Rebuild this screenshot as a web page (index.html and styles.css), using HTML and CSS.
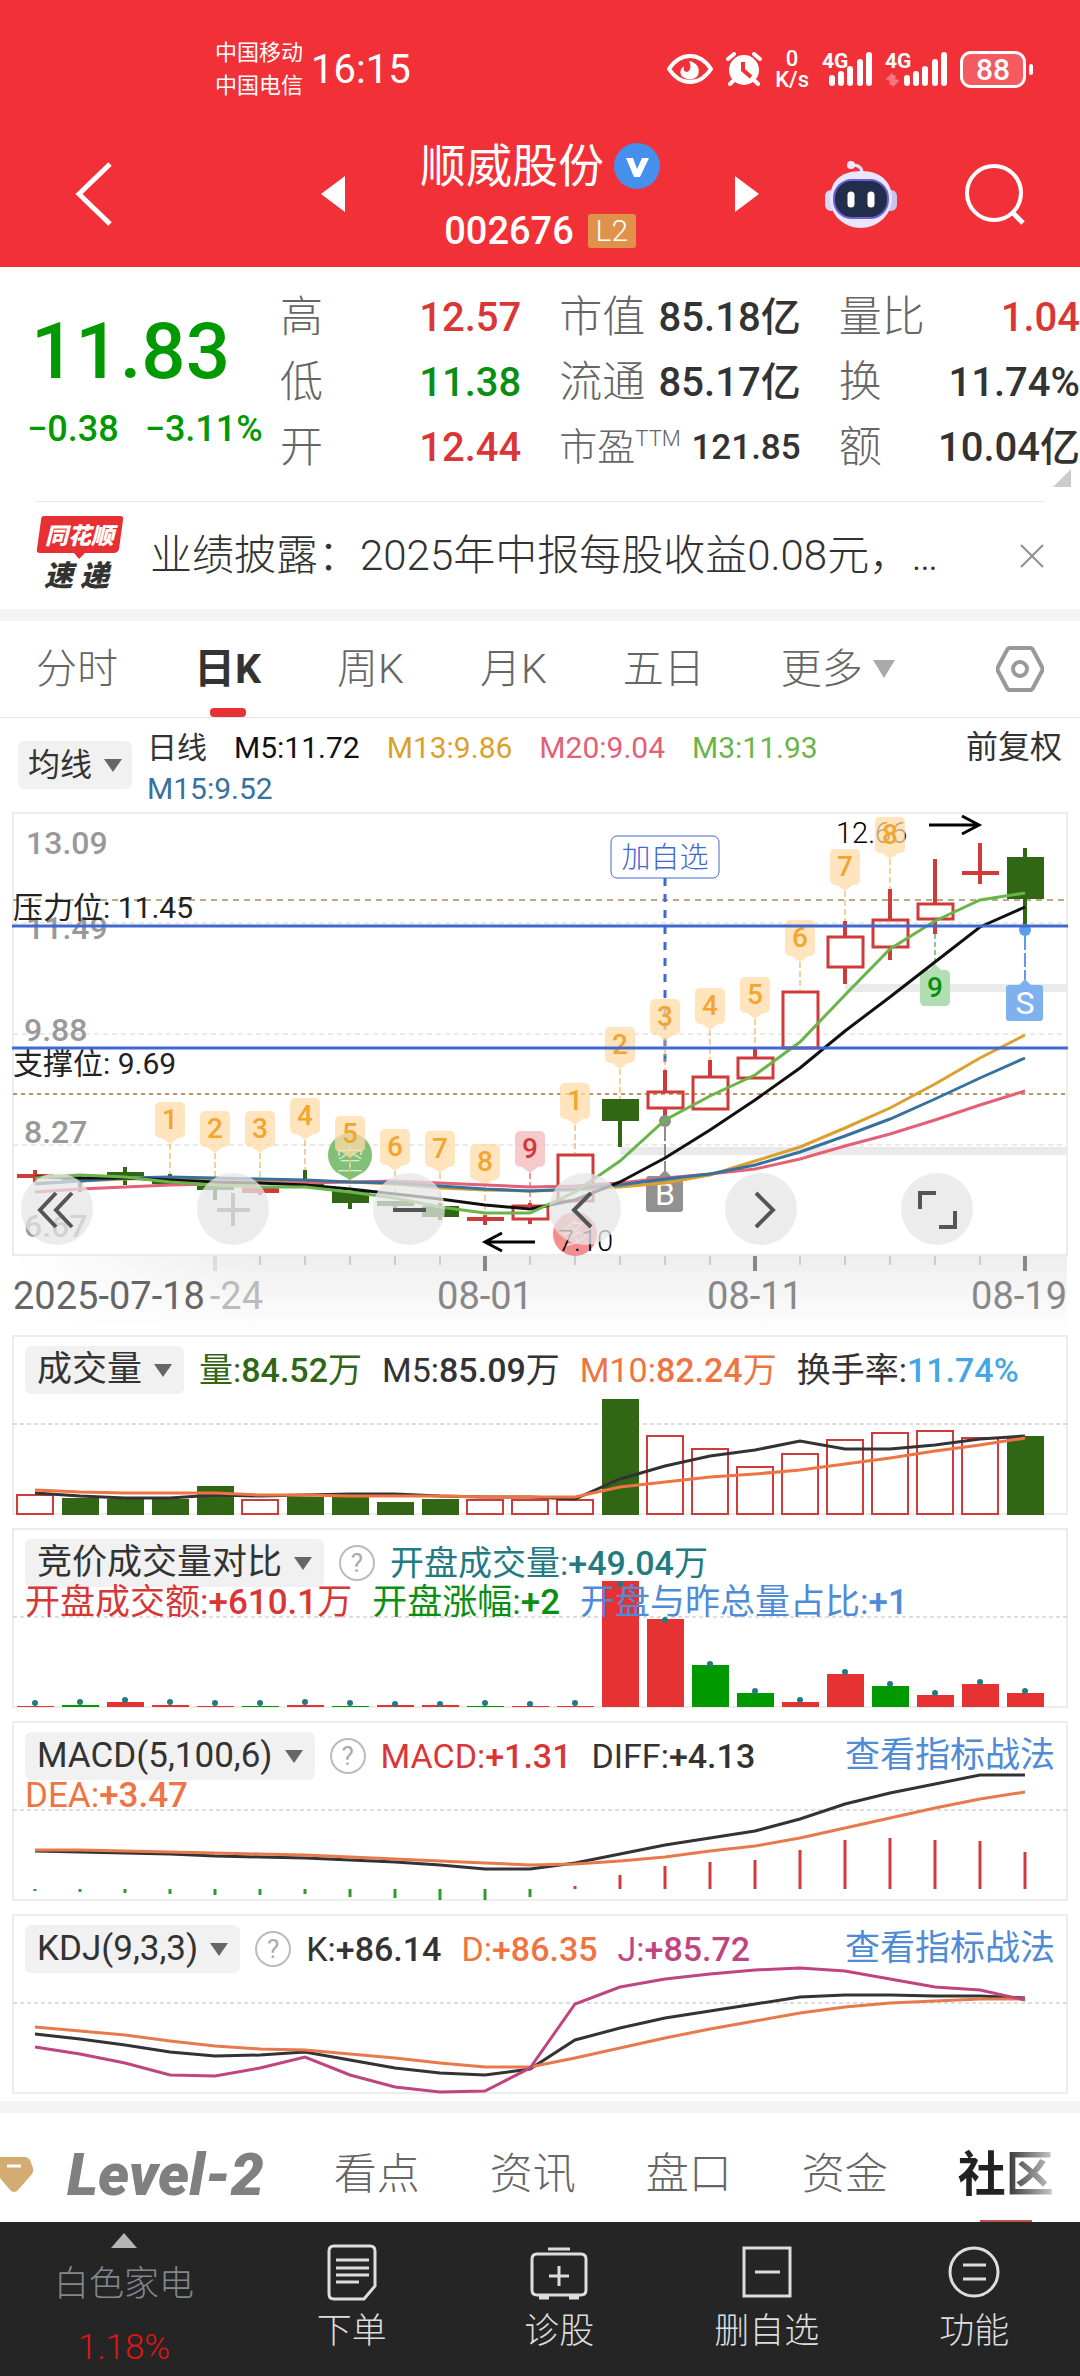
FILE: index.html
```
<!DOCTYPE html>
<html lang="zh-CN">
<head>
    <meta charset="UTF-8">
    <meta name="viewport" content="width=device-width, initial-scale=1.0">
    <title>顺威股份 002676</title>
    <link rel="stylesheet" href="styles.css">
</head>
<body>
    <header class="top">
        <div class="status-bar">
            <div class="carriers"><span>中国移动</span><span>中国电信</span></div>
            <div class="clock">16:15</div>
            <div class="status-icons">
                <svg width="46" height="32" viewBox="0 0 46 32">
                    <path d="M2 16C8 7 15 3 23 3s15 4 21 13C38 25 31 29 23 29S8 25 2 16z" fill="none" stroke="#fff" stroke-width="4" stroke-linejoin="round"/>
                    <path d="M22 8c3 6 1 10-2 11-3 0-4-3-3-6-4 3-5 8-1 11 5 4 12 3 15-2 3-7-2-13-9-14z" fill="#fff"/>
                </svg>
                <svg width="36" height="34" viewBox="0 0 36 34">
                    <circle cx="18" cy="18" r="15" fill="#fff"/>
                    <path d="M2 7l6-5M34 7l-6-5M7 29l-3 3M29 29l3 3" stroke="#fff" stroke-width="4" stroke-linecap="round"/>
                    <path d="M17 10v8l8 7" fill="none" stroke="#f23037" stroke-width="4"/>
                </svg>
                <div class="speed"><span>0</span><span>K/s</span></div>
                <svg width="50" height="44" viewBox="0 -4 50 44">
                    <text x="0" y="17" class="net">4G</text>
                    <path d="M10 27v5M19 23v9M28 18v14M38 11v21M47 4v28" stroke="#fff" stroke-width="6" stroke-linecap="round"/>
                </svg>
                <svg width="62" height="44" viewBox="0 -4 62 44">
                    <text x="0" y="17" class="net">4G</text>
                    <path d="M6 34v-9l-4 4M9 24v9l4-4" fill="none" stroke="#f9777c" stroke-width="3"/>
                    <path d="M22 27v5M31 23v9M40 18v14M50 11v21M59 4v28" stroke="#fff" stroke-width="6" stroke-linecap="round"/>
                </svg>
                <div class="battery">88</div>
            </div>
        </div>
        <nav class="title-bar">
            <button class="back" aria-label="返回">
                <svg width="40" height="68" viewBox="0 0 40 68"><path d="M36 4L5 34l31 30" fill="none" stroke="#fff" stroke-width="5"/></svg>
            </button>
            <button aria-label="上一只">
                <svg width="24" height="36" viewBox="0 0 24 36"><path d="M24 0v36L0 18z" fill="#fff"/></svg>
            </button>
            <div class="stock">
                <h1>顺威股份
                    <svg width="46" height="46" viewBox="0 0 46 46"><circle cx="23" cy="23" r="23" fill="#4590ed"/><path d="M12 15h7l4 11 5-11h7l-9 19h-6z" fill="#fff"/></svg>
                </h1>
                <p class="code">002676 <span class="l2">L2</span></p>
            </div>
            <button aria-label="下一只">
                <svg width="24" height="36" viewBox="0 0 24 36"><path d="M0 0v36l24-18z" fill="#fff"/></svg>
            </button>
            <button class="tool" aria-label="助手">
                <svg width="74" height="70" viewBox="0 0 74 70">
                    <path d="M38 14c0-6-4-8-10-8" fill="none" stroke="#e6e0f8" stroke-width="3"/>
                    <circle cx="27" cy="6" r="4" fill="#eee9fb"/>
                    <rect x="1" y="31" width="12" height="21" rx="6" fill="#dcd8f4"/>
                    <rect x="61" y="31" width="12" height="21" rx="6" fill="#c9c3ee"/>
                    <path d="M37 12c22 0 31 13 31 28S54 69 37 69 6 56 6 40s9-28 31-28z" fill="#e9e6fa"/>
                    <rect x="10" y="21" width="54" height="38" rx="18" fill="#222c4b" stroke="#6d5fd6" stroke-width="2"/>
                    <path d="M27 36v9M47 36v9" stroke="#fff" stroke-width="7" stroke-linecap="round"/>
                </svg>
            </button>
            <button class="tool" aria-label="搜索">
                <svg width="64" height="64" viewBox="0 0 64 64"><circle cx="31" cy="31" r="27" fill="none" stroke="#fff" stroke-width="4"/><path d="M49 50l11 11" stroke="#fff" stroke-width="5"/></svg>
            </button>
        </nav>
    </header>

    <section class="quote">
        <div class="price">
            <strong>11.83</strong>
            <div class="change"><span>−0.38</span><span>−3.11%</span></div>
        </div>
        <dl>
            <div><dt>高</dt><dd class="red">12.57</dd></div>
            <div><dt>低</dt><dd class="green">11.38</dd></div>
            <div><dt>开</dt><dd class="red">12.44</dd></div>
        </dl>
        <dl>
            <div><dt>市值</dt><dd>85.18亿</dd></div>
            <div><dt>流通</dt><dd>85.17亿</dd></div>
            <div class="pe"><dt>市盈<sup>TTM</sup></dt><dd>121.85</dd></div>
        </dl>
        <dl>
            <div><dt>量比</dt><dd class="red">1.04</dd></div>
            <div><dt>换</dt><dd>11.74%</dd></div>
            <div><dt>额</dt><dd>10.04亿</dd></div>
        </dl>
    </section>

    <section class="news">
        <svg width="88" height="84" viewBox="0 0 88 84">
            <path d="M8 2h76q4 0 3 4l-4 29q-1 4-5 4H49l-6 6-5-6H4q-4 0-3-4L5 6q0-4 3-4z" fill="#e63034"/>
            <text x="9" y="30" class="logo-top">同花顺</text>
            <text x="8 44" y="72" class="logo-bottom">速递</text>
        </svg>
        <a href="#">业绩披露：2025年中报每股收益0.08元，…</a>
        <button aria-label="关闭">
            <svg width="24" height="24" viewBox="0 0 24 24"><path d="M1 1l22 22M23 1L1 23" stroke="#8e8e8e" stroke-width="2"/></svg>
        </button>
    </section>

    <nav class="periods">
        <button>分时</button>
        <button class="active">日K</button>
        <button>周K</button>
        <button>月K</button>
        <button>五日</button>
        <button class="more">更多<svg width="22" height="18" viewBox="0 0 22 18"><path d="M0 0h22L11 18z" fill="#aaa"/></svg></button>
        <button class="settings" aria-label="设置">
            <svg width="48" height="46" viewBox="0 0 48 46"><path d="M14 2h20q2 0 3 2l9 17q1 2 0 4l-9 17q-1 2-3 2H14q-2 0-3-2L2 25q-1-2 0-4l9-17q1-2 3-2z" fill="none" stroke="#999" stroke-width="4"/><circle cx="24" cy="23" r="7" fill="none" stroke="#999" stroke-width="4"/></svg>
        </button>
    </nav>

    <section class="ma-legend">
        <button class="pick">均线<svg width="18" height="13" viewBox="0 0 18 13"><path d="M0 0h18L9 13z" fill="#666"/></svg></button>
        <div class="ma-values">
            <span>日线</span>
            <span class="black">M5:11.72</span>
            <span class="yellow">M13:9.86</span>
            <span class="pink">M20:9.04</span>
            <span class="lime">M3:11.93</span>
            <span class="blue">M15:9.52</span>
        </div>
        <span class="adjust">前复权</span>
    </section>

    <section class="chart kline">
        <svg id="kline" viewBox="0 12 1080 523"></svg>
        <div class="chart-tools">
            <button aria-label="最早"><svg viewBox="0 0 72 72"><path d="M35 20L19 37l16 17M51 20L35 37l16 17"/></svg></button>
            <button aria-label="放大" class="faint"><svg viewBox="0 0 72 72"><path d="M36 20v33M20 37h33"/></svg></button>
            <button aria-label="缩小"><svg viewBox="0 0 72 72"><path d="M20 37h33"/></svg></button>
            <button aria-label="左移"><svg viewBox="0 0 72 72"><path d="M42 20L25 37l17 17"/></svg></button>
            <button aria-label="右移"><svg viewBox="0 0 72 72"><path d="M31 20l17 17-17 17"/></svg></button>
            <button aria-label="全屏"><svg viewBox="0 0 72 72"><path d="M19 36V20h16M54 38v16H38"/></svg></button>
        </div>
    </section>

    <section class="chart">
        <svg id="volume" viewBox="0 0 1080 193"></svg>
        <div class="legend">
            <button class="pick">成交量<svg width="18" height="13" viewBox="0 0 18 13"><path d="M0 0h18L9 13z" fill="#666"/></svg></button>
            <span class="dark-green">量:<b>84.52</b>万</span>
            <span>M5:<b>85.09</b>万</span>
            <span class="orange">M10:<b>82.24</b>万</span>
            <span>换手率:<b class="sky">11.74%</b></span>
        </div>
    </section>

    <section class="chart">
        <svg id="auction" viewBox="0 0 1080 193"></svg>
        <div class="legend">
            <button class="pick">竞价成交量对比<svg width="18" height="13" viewBox="0 0 18 13"><path d="M0 0h18L9 13z" fill="#666"/></svg></button>
            <button class="help" aria-label="说明">?</button>
            <span class="teal">开盘成交量:<b>+49.04</b>万</span>
        </div>
        <div class="legend second">
            <span class="red">开盘成交额:<b>+610.1</b>万</span>
            <span class="green">开盘涨幅:<b>+2</b></span>
            <span class="link">开盘与昨总量占比:<b>+1</b></span>
        </div>
    </section>

    <section class="chart">
        <svg id="macd" viewBox="0 0 1080 193"></svg>
        <div class="legend">
            <button class="pick">MACD(5,100,6)<svg width="18" height="13" viewBox="0 0 18 13"><path d="M0 0h18L9 13z" fill="#666"/></svg></button>
            <button class="help" aria-label="说明">?</button>
            <span class="red">MACD:<b>+1.31</b></span>
            <span>DIFF:<b>+4.13</b></span>
            <a href="#">查看指标战法</a>
        </div>
        <div class="legend second"><span class="orange">DEA:<b>+3.47</b></span></div>
    </section>

    <section class="chart">
        <svg id="kdj" viewBox="0 0 1080 187"></svg>
        <div class="legend">
            <button class="pick">KDJ(9,3,3)<svg width="18" height="13" viewBox="0 0 18 13"><path d="M0 0h18L9 13z" fill="#666"/></svg></button>
            <button class="help" aria-label="说明">?</button>
            <span>K:<b>+86.14</b></span>
            <span class="orange">D:<b>+86.35</b></span>
            <span class="purple">J:<b>+85.72</b></span>
            <a href="#">查看指标战法</a>
        </div>
    </section>

    <nav class="info-tabs">
        <svg width="34" height="38" viewBox="0 0 34 38"><path d="M0 1h25q3 0 5 3l3 8q1 3-1 6L18 34q-4 4-8 0L0 22z" fill="#d2ac72"/><path d="M7 10h14" stroke="#fff" stroke-width="3"/></svg>
        <a href="#" class="level2">Level-2</a>
        <a href="#">看点</a>
        <a href="#">资讯</a>
        <a href="#">盘口</a>
        <a href="#">资金</a>
        <a href="#" class="current"><span>社区</span></a>
    </nav>

    <footer class="bottom-bar">
        <button class="sector">
            <svg width="26" height="15" viewBox="0 0 26 15"><path d="M13 0l13 15H0z"/></svg>
            <span>白色家电</span>
            <span class="rise">1.18%</span>
        </button>
        <button>
            <svg width="60" height="60" viewBox="0 0 60 60"><path d="M12 4h36q5 0 5 5v35L42 57H12q-5 0-5-5V9q0-5 5-5zM14 18h33M14 26h33M14 33h33M14 40h23"/></svg>
            下单
        </button>
        <button>
            <svg width="60" height="60" viewBox="0 0 60 60"><path d="M8 12h44q5 0 5 5v31q0 5-5 5H8q-5 0-5-5V17q0-5 5-5zM19 7h22M30 24v20M20 34h20M10 56h10M40 56h10"/></svg>
            诊股
        </button>
        <button>
            <svg width="60" height="60" viewBox="0 0 60 60"><path d="M7 6h46v48H7zM18 30h25"/></svg>
            删自选
        </button>
        <button>
            <svg width="60" height="60" viewBox="0 0 60 60"><circle cx="30" cy="30" r="24"/><path d="M19 23h23M19 37h23"/></svg>
            功能
        </button>
    </footer>
    <script src="chart.js"></script>
</body>
</html>
```
FILE: chart.js
```
const RED = '#cf3a3a';
const GREEN = '#306614';
const x = i => 35 + i * 45;

const line = (ys, color) =>
    `<polyline points="${ys.map((y, i) => x(i) + ',' + y).join(' ')}" fill="none" stroke="${color}" stroke-width="3"/>`;
const dashed = (y, color, dash) =>
    `<path d="M13 ${y}H1067" stroke="${color}" stroke-width="2" stroke-dasharray="${dash}"/>`;
const frame = (y, h) =>
    `<rect x="13" y="${y}" width="1054" height="${h}" fill="none" stroke="#ededed" stroke-width="2"/>`;
const draw = (id, parts) => {
    document.getElementById(id).innerHTML = parts.join('');
};

// kind, high, body top, body bottom, low
const candles = [
    ['r', 370, 374, 378, 383], ['g', 374, 378, 381, 392], ['g', 367, 372, 376, 385],
    ['g', 374, 380, 384, 384], ['g', 386, 386, 390, 400], ['r', 388, 388, 393, 395],
    ['g', 370, 382, 385, 385], ['g', 391, 391, 403, 409], ['g', 401, 401, 406, 408],
    ['g', 403, 406, 417, 420], ['r', 415, 417, 421, 425], ['h', 403, 406, 419, 424],
    ['h', 355, 355, 401, 401], ['g', 299, 299, 321, 347], ['h', 270, 292, 308, 320],
    ['h', 260, 277, 309, 309], ['h', 249, 258, 278, 278], ['h', 192, 192, 248, 248],
    ['h', 121, 137, 167, 184], ['h', 89, 120, 147, 160], ['h', 59, 104, 119, 134],
    ['r', 43, 71, 75, 84], ['g', 48, 57, 99, 130]
];

function candle([kind, high, top, bottom, low], i) {
    const color = kind === 'g' ? GREEN : RED;
    const body = kind === 'h'
        ? `<rect x="${x(i) - 17}" y="${top}" width="35" height="${bottom - top}" fill="none" stroke="${color}" stroke-width="3"/>`
        : `<rect x="${x(i) - 18}" y="${top}" width="37" height="${bottom - top}" fill="${color}"/>`;
    return `<path d="M${x(i)} ${high}V${top}M${x(i)} ${bottom}V${low}" stroke="${color}" stroke-width="4"/>` + body;
}

// column, number, flag top, end of the stem
const flags = [
    [3, 1, 302, 374], [4, 2, 311, 380], [5, 3, 311, 385], [6, 4, 298, 370], [7, 5, 316, 389],
    [8, 6, 329, 400], [9, 7, 331, 404], [10, 8, 344, 416], [11, 9, 331, 404],
    [12, 1, 283, 354], [13, 2, 227, 299], [14, 3, 199, 270], [15, 4, 188, 260],
    [16, 5, 177, 249], [17, 6, 120, 191], [18, 7, 49, 121], [19, 8, 17, 89]
];

function flag([col, n, top, stem]) {
    const hot = n === 9;
    const fill = hot ? '#f4b9b9' : '#ffdba8';
    return `<path d="M${x(col)} ${top + 42}V${stem}" stroke="${hot ? RED : '#dba83e'}" stroke-dasharray="6 3"/>
        <g opacity=".75"><rect x="${x(col) - 15}" y="${top}" width="30" height="36" rx="5" fill="${fill}"/>
        <path d="M${x(col) - 8} ${top + 36}h16l-8 6z" fill="${fill}"/></g>
        <text x="${x(col)}" y="${top + 27}" class="flag" fill="${hot ? RED : '#f2a52f'}">${n}</text>`;
}

const axisTick = i => {
    const big = [4, 10, 16, 22].includes(i);
    return `<path d="M${x(i)} 456V${big ? 471 : 465}" stroke="${i === 4 ? '#ddd' : big ? '#888' : '#ccc'}" stroke-width="${big ? 4 : 2}"/>`;
};

draw('kline', [
    `<defs>
        <linearGradient id="fall" x2="0" y2="1"><stop stop-color="#eee"/><stop offset="1" stop-color="#fff"/></linearGradient>
        <linearGradient id="side"><stop stop-color="#fff"/><stop offset="1" stop-color="#fff" stop-opacity="0"/></linearGradient>
    </defs>`,
    '<rect x="13" y="456" width="1054" height="78" fill="url(#fall)"/>',
    '<rect x="13" y="456" width="240" height="78" fill="url(#side)"/>',
    frame(13, 442),
    dashed(123, '#eaeaea', '5 4'), dashed(234, '#eaeaea', '5 4'), dashed(345, '#eaeaea', '5 4'),
    '<path d="M845 188H1067M620 351H1067" stroke="#eaeaea" stroke-width="8"/>',
    '<text x="26" y="54" class="scale">13.09</text>',
    '<text x="26" y="139" class="scale">11.49</text>',
    '<text x="24" y="241" class="scale">9.88</text>',
    '<text x="24" y="343" class="scale">8.27</text>',
    '<text x="24" y="437" class="scale">6.67</text>',
    dashed(100, '#bda983', '6 5'), dashed(294, '#c29463', '4 4'),
    '<text x="13" y="118" class="level">压力位: 11.45</text>',
    '<text x="13" y="274" class="level">支撑位: 9.69</text>',
    '<path d="M665 78V262" stroke="#4168cf" stroke-width="3" stroke-dasharray="8 8"/>',
    '<rect x="611" y="36" width="108" height="42" rx="6" fill="#fff" stroke="#4168cf" stroke-width="1"/>',
    '<text x="665" y="68" class="watch">加自选</text>',
    '<text x="836" y="43" class="peak">12.66</text>',
    '<path d="M929 25h50M962 16l17 9-17 9M535 442h-50M502 433l-17 9 17 9" fill="none" stroke="#000" stroke-width="3"/>',
    candles.map(candle).join(''),
    // short and long markers
    '<path d="M350 380l-14-8a22 22 0 1 1 28 0z" fill="#6cb560" opacity=".85"/><text x="350" y="370" class="marker">空</text>',
    '<circle cx="575" cy="434" r="22" fill="#f27a7c" opacity=".85"/><text x="575" y="444" class="marker">多</text>',
    flags.map(flag).join(''),
    '<text x="558" y="451" class="peak">7.10</text>',
    // nine-turn flag under the candle
    '<path d="M935 134V164" stroke="#1c8f1c" stroke-width="1" stroke-dasharray="5 3"/>',
    '<path d="M920 175q0-5 5-5h4l6-6 6 6h4q5 0 5 5v26q0 5-5 5h-20q-5 0-5-5z" fill="#b2dfb2"/><text x="935" y="197" class="flag" fill="#0a8f0a">9</text>',
    '<circle cx="665" cy="321" r="6" fill="#8d8d8d"/><path d="M665 327V372" stroke="#8d8d8d" stroke-width="2" stroke-dasharray="14 3"/>',
    '<path d="M646 379q0-3 3-3h10l6-6 6 6h9q3 0 3 3v30q0 3-3 3h-31q-3 0-3-3z" fill="#919191"/><text x="665" y="405" class="trade">B</text>',
    '<circle cx="1025" cy="130" r="6" fill="#5a9feb"/><path d="M1025 136V181" stroke="#5a9feb" stroke-width="2" stroke-dasharray="14 3"/>',
    '<path d="M1006 188q0-3 3-3h10l6-6 6 6h9q3 0 3 3v30q0 3-3 3h-31q-3 0-3-3z" fill="#7fb1f0"/><text x="1025" y="214" class="trade">S</text>',
    line([383, 381, 379, 378, 379, 380, 381, 382, 384, 388, 390, 391, 390, 387, 383, 375, 361, 347, 328, 308, 284, 258, 235], '#dca02c'),
    line([392, 389, 387, 385, 384, 383, 383, 382, 381, 383, 385, 387, 386, 383, 378, 374, 369, 359, 346, 334, 320, 305, 291], '#e36075'),
    line([384, 381, 378, 377, 378, 379, 380, 382, 383, 386, 389, 391, 389, 385, 379, 374, 365, 352, 336, 319, 299, 278, 258], '#37719f'),
    line([377, 378, 378, 380, 382, 383, 385, 389, 394, 399, 405, 409, 400, 382, 358, 330, 300, 268, 231, 197, 162, 127, 107], '#111'),
    line([378, 375, 377, 382, 385, 387, 387, 392, 398, 407, 413, 413, 392, 361, 320, 296, 275, 242, 195, 149, 121, 100, 93], '#69b54a'),
    '<path d="M12 126H1068M12 248H1068" stroke="#4168cf" stroke-width="3"/>',
    candles.map((c, i) => i > 3 ? axisTick(i) : '').join(''),
    '<text x="13" y="509" class="date" fill="#666">2025-07-18</text>',
    '<text x="263" y="509" class="date" fill="#bbb" text-anchor="end">-24</text>',
    '<text x="485" y="509" class="date" fill="#888" text-anchor="middle">08-01</text>',
    '<text x="755" y="509" class="date" fill="#888" text-anchor="middle">08-11</text>',
    '<text x="1067" y="509" class="date" fill="#888" text-anchor="end">08-19</text>'
]);

const volumes = [
    ['h', 160], ['g', 163], ['g', 164], ['g', 164], ['g', 151], ['h', 165], ['g', 162], ['g', 162],
    ['g', 167], ['g', 164], ['h', 165], ['h', 165], ['h', 165], ['g', 64], ['h', 101], ['h', 114],
    ['h', 132], ['h', 119], ['h', 105], ['h', 98], ['h', 96], ['h', 103], ['g', 101]
];

draw('volume', [
    frame(1, 178), dashed(89, '#ddd', '4 3'),
    volumes.map(([kind, top], i) => kind === 'h'
        ? `<rect x="${x(i) - 18}" y="${top}" width="36" height="${179 - top}" fill="none" stroke="${RED}" stroke-width="2"/>`
        : `<rect x="${x(i) - 18}" y="${top}" width="37" height="${180 - top}" fill="${GREEN}"/>`).join(''),
    line([158, 161, 163, 163, 160, 161, 160, 159, 159, 161, 162, 162, 164, 144, 131, 121, 115, 106, 114, 114, 110, 104, 101], '#333'),
    line([155, 157, 158, 158, 158, 160, 160, 161, 161, 161, 162, 162, 162, 152, 147, 142, 139, 135, 129, 123, 116, 110, 103], '#ef7443')
]);

// kind, bar top, dot
const auctions = [
    ['r', 178, 175], ['g', 177, 174], ['r', 174, 172], ['r', 177, 174], ['r', 178, 175], ['g', 178, 175],
    ['r', 177, 174], ['g', 178, 175], ['r', 177, 176], ['r', 177, 176], ['g', 178, 175], ['r', 178, 176],
    ['r', 178, 175], ['r', 53, 56], ['r', 91, 92], ['g', 137, 136], ['g', 165, 163], ['r', 174, 172],
    ['r', 146, 144], ['g', 158, 156], ['r', 167, 165], ['r', 156, 154], ['r', 165, 163]
];

draw('auction', [
    frame(1, 178), dashed(89, '#ddd', '4 3'),
    auctions.map(([kind, top, dot], i) =>
        `<rect x="${x(i) - 18}" y="${top}" width="37" height="${179 - top}" fill="${kind === 'g' ? '#009900' : '#e63232'}"/>
        <circle cx="${x(i)}" cy="${dot}" r="3" fill="#237b82"/>`).join('')
]);

const histogram = [170, 171, 172, 173, 174, 174, 173, 176, 177, 179, 179, 176, 165, 154, 145, 141, 139, 129, 119, 117, 119, 120, 131];

draw('macd', [
    frame(1, 178), dashed(89, '#ddd', '4 3'),
    histogram.map((y, i) => `<path d="M${x(i)} 168V${y}" stroke="${y > 168 ? '#2e9a2e' : '#d13b3b'}" stroke-width="3"/>`).join(''),
    line([130, 131, 132, 133, 135, 136, 137, 139, 141, 144, 148, 148, 142, 133, 124, 117, 110, 98, 83, 72, 63, 54, 54], '#333'),
    line([129, 129, 130, 131, 132, 133, 134, 136, 138, 140, 142, 144, 143, 140, 136, 130, 125, 117, 107, 97, 87, 78, 71], '#e67a4c')
]);

draw('kdj', [
    frame(1, 178), dashed(89, '#ddd', '4 3'),
    line([120, 125, 131, 138, 142, 141, 138, 146, 154, 159, 161, 155, 126, 114, 104, 97, 90, 83, 81, 81, 82, 82, 84], '#333'),
    line([113, 117, 121, 127, 132, 135, 136, 140, 144, 149, 153, 153, 144, 134, 124, 115, 107, 99, 93, 89, 87, 85, 85], '#e67a4c'),
    line([133, 140, 149, 161, 162, 154, 143, 161, 173, 178, 177, 154, 90, 73, 65, 60, 56, 54, 57, 65, 73, 76, 86], '#bf4580')
]);
```
FILE: styles.css
```
* {
    box-sizing: border-box;
}

body {
    margin: 0;
    background-color: #fff;
    color: #333;
    font-family: Roboto, "Noto Sans CJK SC", sans-serif;
    font-weight: 300;
}

h1, p, dl, dd {
    margin: 0;
}

button {
    padding: 0;
    border: none;
    background: none;
    color: inherit;
    font: inherit;
    cursor: pointer;
}

a {
    color: inherit;
    text-decoration: none;
}

svg {
    display: block;
}

.red { color: #d93636; }
.green { color: #0b8f12; }
.black { color: #111; }
.yellow { color: #dca02c; }
.pink { color: #e36075; }
.lime { color: #69b54a; }
.blue { color: #37719f; }
.dark-green { color: #306614; }
.orange { color: #ef7443; }
.sky { color: #45a6e6; }
.teal { color: #237b82; }
.link { color: #4f8bd6; }
.purple { color: #bf4580; }

/* Header */
.top {
    background-color: #f23037;
    color: #fff;
    padding-bottom: 3px;
}

.status-bar {
    display: flex;
    align-items: center;
    height: 134px;
    padding: 4px 54px 0 215px;
}

.carriers {
    display: flex;
    flex-direction: column;
    font-size: 22px;
    line-height: 33px;
    font-weight: 400;
}

.clock {
    margin-left: 8px;
    font-size: 40px;
    font-weight: 400;
}

.status-icons {
    display: flex;
    align-items: center;
    gap: 13px;
    margin-left: auto;
}

.speed {
    display: flex;
    flex-direction: column;
    text-align: center;
    font-size: 22px;
    line-height: 21px;
    font-weight: 500;
}

.net {
    font-size: 21px;
    font-weight: 700;
    fill: #fff;
}

.battery {
    position: relative;
    width: 66px;
    border: 3px solid #fff;
    border-radius: 11px;
    background-color: #f45a60;
    text-align: center;
    font-size: 30px;
    line-height: 31px;
    font-weight: 500;
}

.battery::after {
    content: "";
    position: absolute;
    right: -10px;
    top: 10px;
    width: 4px;
    height: 11px;
    border-radius: 2px;
    background-color: #fff;
}

.title-bar {
    display: flex;
    align-items: center;
    padding: 0 53px 0 74px;
}

.title-bar button {
    padding-bottom: 10px;
}

.back {
    margin-right: 207px;
}

.tool {
    margin-left: 65px;
}

.stock {
    flex: 1;
    white-space: nowrap;
}

.stock h1 {
    display: flex;
    align-items: center;
    justify-content: center;
    gap: 10px;
    font-size: 46px;
    line-height: 64px;
    font-weight: 400;
}

.code {
    display: flex;
    align-items: center;
    justify-content: center;
    gap: 14px;
    font-size: 38px;
    line-height: 66px;
    font-weight: 500;
}

.l2 {
    width: 48px;
    border-radius: 3px;
    background-color: #e0914a;
    text-align: center;
    font-size: 30px;
    line-height: 34px;
    font-weight: 300;
}

/* Quote */
.quote {
    position: relative;
    display: grid;
    grid-template-columns: 242px repeat(3, 1fr);
    gap: 38px;
    padding: 18px 0 21px;
}

.quote::after {
    content: "";
    position: absolute;
    right: 9px;
    bottom: 14px;
    border: 9px solid;
    border-color: transparent #ccc #ccc transparent;
}

.price {
    padding: 20px 0 0 27px;
    color: #009900;
    white-space: nowrap;
}

.price strong {
    display: block;
    font-size: 78px;
    line-height: 94px;
    font-weight: 500;
    padding-left: 4px;
}

.change {
    display: flex;
    gap: 26px;
    font-size: 36px;
    line-height: 60px;
    font-weight: 500;
}

.quote dl div {
    display: flex;
    justify-content: space-between;
    align-items: center;
    height: 65px;
    line-height: 65px;
    white-space: nowrap;
}

.quote dt {
    font-size: 43px;
    color: #666;
}

.quote dd {
    font-size: 40px;
    font-weight: 500;
}

.quote .pe dt {
    font-size: 38px;
}

.quote .pe dd {
    font-size: 35px;
}

.quote sup {
    font-size: 22px;
    line-height: 1;
}

/* News */
.news {
    display: flex;
    align-items: center;
    height: 108px;
    margin: 0 36px;
    border-top: 1px solid #e8e8e8;
}

.news a {
    flex: 1;
    margin-left: 26px;
    font-size: 42px;
    line-height: 56px;
    white-space: nowrap;
}

.logo-top {
    font-size: 23px;
    font-weight: 900;
    font-style: italic;
    fill: #fff;
}

.logo-bottom {
    font-size: 29px;
    font-weight: 900;
    font-style: italic;
    fill: #333;
}

/* Periods */
.periods {
    display: flex;
    align-items: center;
    gap: 76px;
    height: 109px;
    padding: 0 36px;
    border-top: 12px solid #f4f4f4;
    border-bottom: 1px solid #e3e3e3;
    font-size: 41px;
    color: #666;
    white-space: nowrap;
}

.periods button {
    position: relative;
    line-height: 96px;
}

.periods .active {
    color: #333;
    font-weight: 700;
}

.periods .active::after {
    content: "";
    position: absolute;
    left: 50%;
    bottom: 0;
    width: 36px;
    height: 9px;
    margin-left: -18px;
    border-radius: 4px;
    background-color: #e63232;
}

.periods .more {
    display: flex;
    align-items: center;
    gap: 10px;
}

.periods .settings {
    margin-left: auto;
}

/* Legends */
.pick {
    display: flex;
    align-items: center;
    gap: 12px;
    height: 48px;
    padding: 0 12px;
    border-radius: 6px;
    background-color: #f1f1f1;
    font-size: 35px;
    font-weight: 400;
    line-height: 48px;
    white-space: nowrap;
}

.ma-legend {
    display: flex;
    align-items: flex-start;
    height: 94px;
    padding: 9px 18px 0;
    font-size: 30px;
    font-weight: 400;
    line-height: 41px;
}

.ma-legend .pick {
    margin-top: 14px;
    padding: 0 10px;
    font-size: 32px;
}

.ma-values {
    display: flex;
    flex-wrap: wrap;
    flex: 1;
    column-gap: 27px;
    margin-left: 15px;
    padding-right: 60px;
}

.adjust {
    font-size: 32px;
}

.chart {
    position: relative;
}

.chart > svg {
    width: 100%;
    height: auto;
}

.legend {
    position: absolute;
    top: 11px;
    left: 25px;
    right: 25px;
    display: flex;
    align-items: center;
    gap: 20px;
    height: 48px;
    font-size: 34px;
    font-weight: 400;
    line-height: 48px;
    white-space: nowrap;
}

.legend .pick,
.legend .help {
    margin-right: -5px;
}

.legend b {
    font-weight: 500;
}

.legend a {
    margin-left: auto;
    color: #4f8bd6;
    font-size: 35px;
}

.legend.second {
    top: 51px;
    font-size: 35px;
}

.help {
    width: 36px;
    height: 36px;
    border: 2px solid #bbb;
    border-radius: 50%;
    color: #aaa;
    font-size: 26px;
    line-height: 30px;
}

/* Chart text */
.scale {
    font-size: 32px;
    font-weight: 500;
    fill: #999;
}

.level {
    font-size: 30px;
    fill: #222;
    font-weight: 400;
}

.watch {
    font-size: 29px;
    fill: #4168cf;
    text-anchor: middle;
}

.peak {
    font-size: 29px;
    fill: #000;
}

.flag {
    font-size: 28px;
    font-weight: 500;
    text-anchor: middle;
}

.marker {
    font-size: 28px;
    fill: #fff;
    opacity: .7;
    text-anchor: middle;
}

.trade {
    font-size: 32px;
    fill: #fff;
    font-weight: 400;
    text-anchor: middle;
}

.date {
    font-size: 38px;
    font-weight: 400;
}

.chart-tools {
    position: absolute;
    top: 69%;
    left: 21px;
    display: flex;
    gap: 104px;
}

.chart-tools button {
    width: 72px;
    height: 72px;
    border-radius: 50%;
    background-color: rgba(230, 230, 230, .75);
}

.chart-tools path {
    fill: none;
    stroke: #555;
    stroke-width: 4;
}

.chart-tools .faint path {
    stroke: #ccc;
}

/* Info tabs */
.info-tabs {
    display: flex;
    align-items: center;
    gap: 70px;
    height: 121px;
    padding-top: 14px;
    border-top: 12px solid #f4f4f4;
    font-size: 43px;
    line-height: 95px;
    color: #666;
    white-space: nowrap;
    overflow: hidden;
}

.info-tabs .level2 {
    margin-left: -37px;
    color: #808080;
    font-size: 59px;
    font-weight: 900;
    font-style: italic;
}

.info-tabs .current {
    position: relative;
    font-size: 48px;
    font-weight: 700;
}

.info-tabs .current::after {
    content: "";
    position: absolute;
    left: 22px;
    bottom: 0;
    width: 52px;
    height: 2px;
    background-color: #c0504d;
}

.current span {
    background: linear-gradient(90deg, #222 45%, #ccc);
    background-clip: text;
    -webkit-background-clip: text;
    color: transparent;
}

/* Bottom bar */
.bottom-bar {
    display: flex;
    height: 154px;
    padding-right: 2px;
    background-color: #252525;
    color: #ddd;
    font-size: 35px;
}

.bottom-bar button {
    flex: 1;
    display: flex;
    flex-direction: column;
    align-items: center;
    padding-top: 20px;
    line-height: 60px;
}

.bottom-bar path,
.bottom-bar circle {
    fill: none;
    stroke: #ddd;
    stroke-width: 3;
}

.bottom-bar .sector {
    flex: none;
    width: 248px;
    padding-top: 11px;
    color: #83888f;
}

.bottom-bar .sector path {
    fill: #b5b5b5;
    stroke: none;
}

.sector span {
    margin-top: 7px;
    margin-bottom: -4px;
}

.rise {
    color: #e01414;
}
```
